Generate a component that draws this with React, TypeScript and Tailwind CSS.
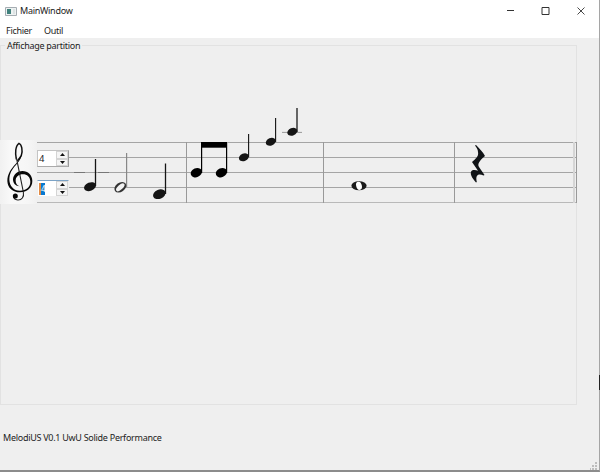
import React from "react";

const LINES = [142.5, 157.5, 172.5, 187.5, 202.5];

function QuarterHead({ x, y, rx = 6.2, ry = 4.2, fill = "#151515" }: { x: number; y: number; rx?: number; ry?: number; fill?: string }) {
  return <ellipse cx={x} cy={y} rx={rx} ry={ry} fill={fill} transform={`rotate(-22 ${x} ${y})`} />;
}

function Score() {
  return (
    <svg className="block h-[110px] w-[577px]" viewBox="0 100 577 110" fill="none">
      <defs>
        <linearGradient id="paper" x1="0" x2="1" y1="0" y2="0">
          <stop offset="0" stopColor="#f1f1f1" />
          <stop offset="0.3" stopColor="#f9f9f9" />
          <stop offset="0.75" stopColor="#f6f6f6" />
          <stop offset="1" stopColor="#f0f0f0" />
        </linearGradient>
      </defs>
      {LINES.map((y, i) => (
        <path key={y} d={`M37 ${y}H577`} stroke={i === 4 ? "#b9b9b9" : "#a5a5a5"} />
      ))}
      <path d="M74 172.500H85M98 172.500H109" stroke="#777" />
      <path d="M186.5 142V203M323.5 142V203M454.5 142V203M576.5 142V203" stroke="#999" />
      <path d="M574 142V203" stroke="#d6d6d6" strokeWidth="2" />
      <rect x="0" y="140" width="37" height="64" fill="url(#paper)" />
      <g transform="translate(0 130) scale(.33333)">
        <path
          d="M49 88C45 70 46 47 57 40C65 43 69 62 64 76C61 82 57 87 52 93"
          stroke="#111"
          strokeWidth="4.500"
        />
        <path
          fill="#080808"
          d="M66 62C67 82 58 93 48 105C36 118 28 130 28 149C29 168 41 182 60 182C78 182 91 171 91 155C91 141 81 133 69 133C56 133 47 141 47 152C47 160 51 166 59 169C47 169 39 160 39 148C40 133 53 123 67 123C84 123 97 135 97 153C97 173 81 187 60 187C38 187 23 174 22 153C22 132 33 118 46 103C56 91 64 80 66 62Z"
        />
        <path d="M49 82L70 186C73 201 65 211 53 210C45 209 41 204 41 199" stroke="#222" strokeWidth="3.300" />
        <circle cx="46" cy="198" r="7.5" fill="#080808" />
      </g>

      <path d="M95.5 159V186" stroke="#151515" strokeWidth="1.3" />
      <QuarterHead x={90} y={186.7} />
      <path d="M126.600 153V187" stroke="#888" strokeWidth="1.2" />
      <ellipse cx="120.3" cy="187.3" rx="6.500" ry="4.600" fill="#333" transform="rotate(-35 120.3 187.3)" />
      <ellipse cx="120.3" cy="187.3" rx="5.200" ry="2.400" fill="#f2f2f2" transform="rotate(-42 120.3 187.3)" />
      <path d="M165.5 163.5V194" stroke="#151515" strokeWidth="1.3" />
      <QuarterHead x={159.3} y={194.2} rx={6.5} ry={4.6} />

      <path d="M201.6 143V173M226.6 143V173" stroke="#000" strokeWidth="1.2" />
      <path d="M201 142H227V147.7H201Z" fill="#000" />
      <QuarterHead x={196.3} y={172.7} rx={5.8} ry={4.5} fill="#000" />
      <QuarterHead x={221.4} y={172.7} rx={5.8} ry={4.5} fill="#000" />
      <path d="M248.6 134V157" stroke="#111" strokeWidth="1.1" />
      <QuarterHead x={243.9} y={157.3} rx={5.2} ry={3.7} />
      <path d="M275.6 118V142" stroke="#111" strokeWidth="1.1" />
      <QuarterHead x={270.8} y={141.8} rx={5.2} ry={3.7} />
      <path d="M282 132.4H302" stroke="#999" />
      <path d="M297 108V132" stroke="#555" strokeWidth="1.8" />
      <QuarterHead x={292.3} y={131.8} rx={5.2} ry={3.7} />

      <ellipse cx="359" cy="185.8" rx="7.600" ry="4.500" fill="#1a1a1a" />
      <ellipse cx="359" cy="185.8" rx="2.800" ry="4.200" fill="#fff" transform="rotate(-15 359 185.8)" />
      <path
        d="M476 145C479 148 483 152 485 156C480 160 477 164 479 167L484.5 175L483.5 175.5C479 173.500 475 174 476.800 182L476 182.500C472 178 469 173 472 170.500C474 169.700 476 170 478 170.800L472 162C475 159 479 157 478 152C478 149 476 147 475 145.500Z"
        fill="#111417"
      />
    </svg>
  );
}

function SpinBox({ active = false }: { active?: boolean }) {
  return (
    <div className={`flex h-[17px] w-[32px] border bg-white ${active ? "border-[#efefef] border-t-[#7ba2c5]" : "border-[#c4c4c4] border-r-[#999] border-b-[#aaa]"}`}>
      <div className="flex flex-1 items-center pl-px text-[9.5px] leading-none text-[#222]">
        <span className={active ? "flex h-[12px] w-[6px] items-center border-l-2 border-[#e28b45] bg-[#0878d0] text-[8px] text-white" : ""}>4</span>
      </div>
      <div className="flex w-[12px] flex-col bg-[#eee]">
        <div className="flex flex-1 items-center justify-center border border-[#d4d4d4] bg-[#f5f5f5]">
          <svg className="h-[3px] w-[5px]" viewBox="0 0 5 3"><path d="M0 3L2.500 0L5 3Z" fill="#111" /></svg>
        </div>
        <div className="flex flex-1 items-center justify-center border border-[#d4d4d4] bg-[#f5f5f5]">
          <svg className="h-[3px] w-[5px]" viewBox="0 0 5 3"><path d="M0 0H5L2.500 3Z" fill="#111" /></svg>
        </div>
      </div>
    </div>
  );
}

export default function App() {
  return (
    <div className="h-[475px] w-[601px] overflow-hidden bg-white font-['Noto_Sans','Open_Sans',sans-serif] text-[9px] tracking-[-0.28px] text-[#222]">
      <div className="relative flex h-[472px] w-[600px] flex-col border-r border-b-2 border-r-[#a5a5a5] border-b-[#8c8c8c] bg-[#efefef]">
        <header className="flex h-[22px] shrink-0 items-center bg-white pl-[5px]">
          <svg className="h-[9px] w-[12px]" viewBox="0 0 12 9">
            <path d="M.5.5H11.500V8.500H.5Z" fill="#eef2f2" stroke="#a5adb2" />
            <path d="M2 2H6V7H2Z" fill="#40817c" />
            <path d="M8 2H10V7H8Z" fill="#dce3e4" />
          </svg>
          <h1 className="ml-[3px] flex-1 text-[9px]">MainWindow</h1>
          <svg className="mr-[14px] h-[10px] w-[80px]" viewBox="0 0 80 10" fill="none" stroke="#333">
            <path d="M2 4.500H9M37 1.500H44V8.500H37Z" />
            <path d="M72.500 1.500L79.500 8.500M79.500 1.500L72.500 8.500" strokeWidth=".9" />
          </svg>
        </header>
        <nav className="flex h-[16px] shrink-0 items-center gap-[12px] bg-white pl-[6px] leading-none">
          <span>Fichier</span>
          <span>Outil</span>
        </nav>
        <fieldset className="mt-[1px] h-[366px] w-[577px] min-w-0 shrink-0 border border-[#e2e2e2] pt-[50px]">
          <legend className="ml-[4px] px-[2px] leading-[12px]">
            <span className="relative top-px">Affichage partition</span>
          </legend>
          <div className="relative -ml-px -mt-px w-[577px]">
            <Score />
            <div className="absolute left-[37px] top-[50px]"><SpinBox /></div>
            <div className="absolute left-[37px] top-[80px]"><SpinBox active /></div>
          </div>
        </fieldset>
        <footer className="mt-[27px] pl-[3px] leading-[12px]">MelodiUS V0.1 UwU Solide Performance</footer>
        <svg className="absolute bottom-0 right-[1px] h-[8px] w-[8px]" viewBox="0 0 8 8" fill="#bdbdbd">
          <path d="M5 0H7V2H5ZM5 3H7V5H5ZM2 3H4V5H2ZM5 6H7V8H5ZM2 6H4V8H2ZM0 6H1V8H0Z" />
        </svg>
        <div className="absolute -right-px top-[375px] h-[15px] w-px bg-[#222]" />
      </div>
    </div>
  );
}
